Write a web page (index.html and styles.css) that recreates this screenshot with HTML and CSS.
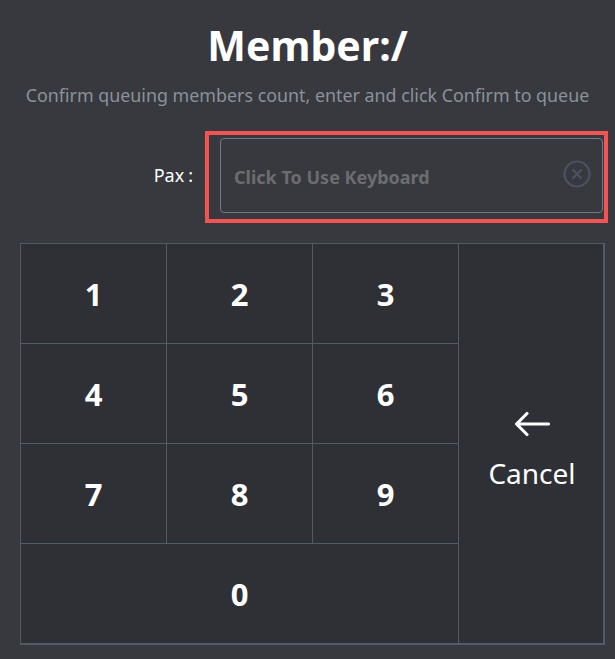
FILE: index.html
```html
<!DOCTYPE html>
<html>
<head>
<meta charset="utf-8">
<link rel="stylesheet" href="styles.css">
</head>
<body>
<div class="page">
  <h1 class="title">Member:/</h1>
  <p class="subtitle">Confirm queuing members count, enter and click Confirm to queue</p>
  <div class="form-row">
    <label class="label">Pax<span class="colon">:</span></label>
    <div class="error-wrap">
      <div class="input">
        <span class="placeholder">Click To Use Keyboard</span>
        <svg class="clear" width="28" height="28" viewBox="0 0 28 28">
          <circle cx="14" cy="14" r="12.5" fill="none" stroke="#4a5163" stroke-width="2.2"/>
          <path d="M10 10 L18 18 M18 10 L10 18" stroke="#4a5163" stroke-width="2.4" stroke-linecap="round"/>
        </svg>
      </div>
    </div>
  </div>
  <div class="keypad">
    <div class="key">1</div>
    <div class="key">2</div>
    <div class="key">3</div>
    <div class="key cancel">
      <svg width="36" height="26" viewBox="0 0 36 26">
        <path d="M34.5 13 H3 M13 2.5 L2.5 13 L13 23.5" fill="none" stroke="#ffffff" stroke-width="3.1" stroke-linecap="round" stroke-linejoin="round"/>
      </svg>
      <span class="cancel-text">Cancel</span>
    </div>
    <div class="key">4</div>
    <div class="key">5</div>
    <div class="key">6</div>
    <div class="key">7</div>
    <div class="key">8</div>
    <div class="key">9</div>
    <div class="key zero">0</div>
  </div>
</div>
</body>
</html>
```
FILE: styles.css
```css
html, body {
  margin: 0;
  padding: 0;
  background: #38393e;
}
.page {
  width: 615px;
  height: 659px;
  font-family: "Noto Sans", "Open Sans", sans-serif;
  color: #ffffff;
  overflow: hidden;
}
.title {
  margin: 0;
  padding-top: 18px;
  text-align: center;
  font-size: 41px;
  font-weight: 700;
  line-height: 54px;
  height: 54px;
}
.subtitle {
  margin: 11px 0 0 0;
  text-align: center;
  font-size: 17.85px;
  line-height: 24px;
  color: #8a919c;
  letter-spacing: 0;
}
.form-row {
  display: flex;
  align-items: center;
  margin-top: 24px;
  height: 92px;
}
.label {
  width: 193px;
  text-align: right;
  font-size: 18px;
  color: #ffffff;
  margin-right: 12px;
  margin-top: -5px;
}
.colon {
  margin-left: 4px;
}
.error-wrap {
  width: 403px;
  height: 92px;
  border: 4px solid #f25454;
  padding: 3px 1px 6px 11px;
  box-sizing: border-box;
  display: flex;
  flex-direction: column;
}
.input {
  flex: 1;
  border: 1px solid #727a87;
  border-radius: 4px;
  display: flex;
  align-items: center;
  padding: 0 11px 0 13px;
  justify-content: space-between;
}
.placeholder {
  font-size: 18px;
  font-weight: 700;
  color: #6c6d70;
  margin-top: 2px;
}
.clear {
  display: block;
  margin-top: -3px;
}
.keypad {
  margin: 20px 0 0 20px;
  width: 585px;
  height: 402px;
  box-sizing: border-box;
  display: grid;
  grid-template-columns: 146px 146px 146px 146px;
  grid-template-rows: 100px 100px 100px 100px;
  border-top: 1px solid #515a69;
  border-left: 1px solid #515a69;
  border-right: 2px solid #515a69;
  border-bottom: 2px solid #515a69;
  background: #2f3036;
}
.key {
  display: flex;
  align-items: center;
  justify-content: center;
  font-size: 31px;
  font-weight: 700;
  border-right: 1px solid #515a69;
  border-bottom: 1px solid #515a69;
}
.cancel {
  grid-column: 4;
  grid-row: 1 / span 4;
  border-right: none;
  border-bottom: none;
  flex-direction: column;
  font-weight: 400;
  padding-top: 14px;
}
.cancel svg {
  display: block;
}
.cancel-text {
  font-size: 28px;
  margin-top: 17px;
}
.zero {
  grid-column: 1 / span 3;
  border-bottom: none;
}
```
